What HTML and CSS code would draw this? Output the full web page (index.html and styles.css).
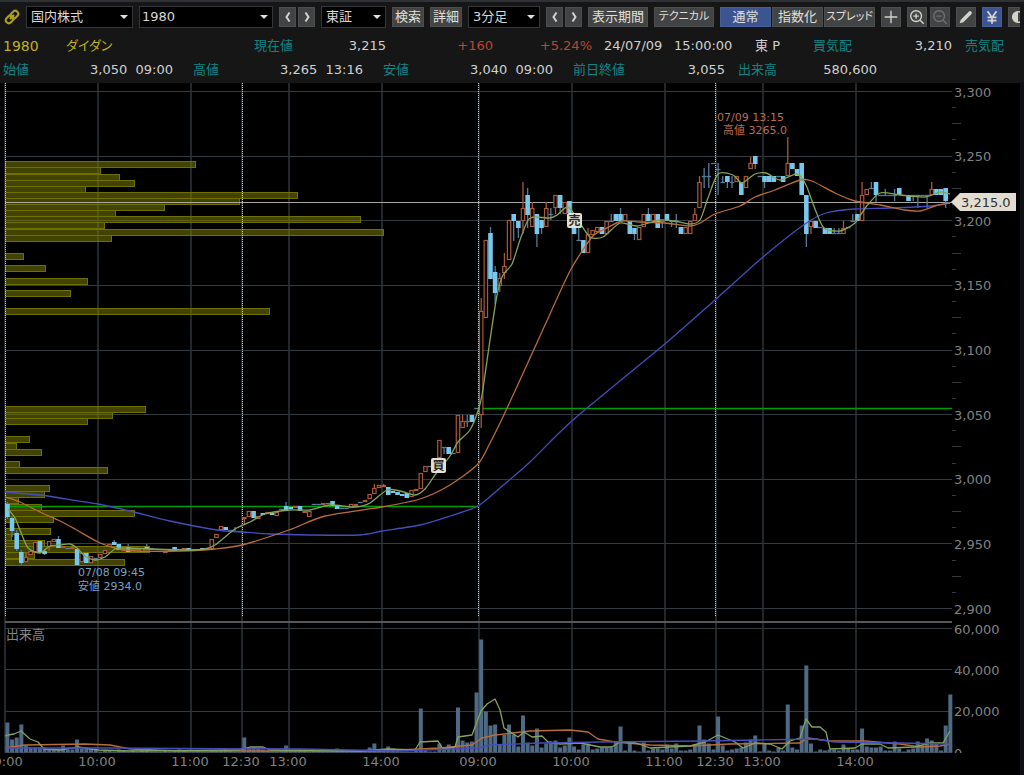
FILE: index.html
```html
<!DOCTYPE html>
<html lang="ja">
<head>
<meta charset="utf-8">
<title>1980 ダイダン</title>
<link rel="stylesheet" href="styles.css">
</head>
<body>
<header class="head">
  <div class="toolbar">
    <svg class="link-icon" viewBox="0 0 16 16" aria-hidden="true">
      <g transform="rotate(-45 8 8)">
        <rect x="0.5" y="5" width="8.5" height="6" rx="3"/>
        <rect x="7" y="5" width="8.5" height="6" rx="3"/>
        <path d="M5 8h6"/>
      </g>
    </svg>
    <span class="pick pick-market"><select aria-label="商品"><option>国内株式</option></select></span>
    <span class="pick pick-code"><select aria-label="銘柄コード"><option>1980</option></select></span>
    <span class="pair navs">
      <button class="btn nav" aria-label="前の銘柄"><svg viewBox="0 0 10 12"><path d="M6.5 1.5 3.5 6l3 4.5"/></svg></button>
      <button class="btn nav" aria-label="次の銘柄"><svg viewBox="0 0 10 12"><path d="M3.5 1.5 6.5 6l-3 4.5"/></svg></button>
    </span>
    <span class="pick pick-exchange"><select aria-label="市場"><option>東証</option></select></span>
    <button class="btn short">検索</button>
    <button class="btn short">詳細</button>
    <span class="pick pick-span"><select aria-label="足種"><option>3分足</option></select></span>
    <span class="pair navs">
      <button class="btn nav" aria-label="前の足種"><svg viewBox="0 0 10 12"><path d="M6.5 1.5 3.5 6l3 4.5"/></svg></button>
      <button class="btn nav" aria-label="次の足種"><svg viewBox="0 0 10 12"><path d="M3.5 1.5 6.5 6l-3 4.5"/></svg></button>
    </span>
    <button class="btn long">表示期間</button>
    <button class="btn long kana">テクニカル</button>
    <span class="pair">
      <button class="btn mode on">通常</button>
      <button class="btn mode">指数化</button>
      <button class="btn mode kana">スプレッド</button>
    </span>
    <button class="btn tool" aria-label="十字カーソル"><svg viewBox="0 0 20 20"><path d="M10 3v14M3 10h14"/></svg></button>
    <span class="zooms">
      <button class="btn tool" aria-label="拡大"><svg viewBox="0 0 20 20"><circle cx="9" cy="9" r="6"/><path d="M6 9h6M9 6v6M13.5 13.5l4 4"/></svg></button>
      <button class="btn tool dim" aria-label="縮小"><svg viewBox="0 0 20 20"><circle cx="9" cy="9" r="6"/><path d="M6 9h6M13.5 13.5l4 4"/></svg></button>
    </span>
    <button class="btn tool" aria-label="描画"><svg viewBox="0 0 20 20"><path class="pen" d="M6.500 13.500 14.500 5.500"/><path class="solid" d="M3 17l1.200-4.200 3 3z"/></svg></button>
    <button class="btn tool on" aria-label="約定表示"><svg viewBox="0 0 20 20"><path class="bold" d="M5 3.500 10 10.500 15 3.500M10 10v7.500M5 10.500h10M5 14h10"/></svg></button>
    <button class="btn tool" aria-label="配色"><svg viewBox="0 0 20 20"><circle cx="10" cy="10" r="6"/><path class="solid" d="M10 4a6 6 0 0 0 0 12z"/></svg></button>
  </div>
  <div class="quote quote-main">
    <span class="code">1980</span><span class="code name">ダイダン</span>
    <span class="cap">現在値</span><span class="num">3,215</span>
    <span class="num rise">+160</span><span class="num rise">+5.24%</span>
    <span class="txt">24/07/09</span><span class="txt">15:00:00</span><span class="txt">東 P</span>
    <span class="cap">買気配</span><span class="num">3,210</span><span class="cap">売気配</span>
  </div>
  <div class="quote quote-day">
    <span class="cap">始値</span><span class="num">3,050&nbsp; 09:00</span>
    <span class="cap">高値</span><span class="num">3,265&nbsp; 13:16</span>
    <span class="cap">安値</span><span class="num">3,040&nbsp; 09:00</span>
    <span class="cap">前日終値</span><span class="num">3,055</span>
    <span class="cap">出来高</span><span class="num">580,600</span>
  </div>
</header>
<main class="board">
  <svg class="chart" viewBox="0 83 1020 692" preserveAspectRatio="xMinYMin meet" role="img" aria-label="3分足チャート">
    <defs><clipPath id="volume-clip"><rect x="0" y="625" width="1020" height="128"/></clipPath></defs>
    <g id="grid"></g>
    <g id="profile"></g>
    <g id="base"></g>
    <g id="candles"></g>
    <g id="volume"></g>
    <g id="averages"></g>
    <g id="axis"></g>
    <g class="note low"><text x="78" y="576">07/08 09:45</text><text x="78" y="590">安値 2934.0</text></g>
    <g class="note high"><text x="717" y="121">07/09 13:15</text><text x="723" y="134">高値 3265.0</text></g>
    <g class="trade"><rect x="431" y="458" width="15" height="15" rx="2"/><text x="438.5" y="470">買</text></g>
    <g class="trade"><rect x="567" y="213" width="15" height="15" rx="2"/><text x="574.5" y="225">売</text></g>
    <g class="price-tag"><path d="M951 202 960 193H1016V211H960z"/><text x="961" y="207">3,215.0</text></g>
    <text class="pane-title" x="6" y="639">出来高</text>
  </svg>
</main>
<script src="chart.js"></script>
</body>
</html>
```
FILE: styles.css
```css
* { box-sizing: border-box; }
body {
  margin: 0;
  height: 100vh;
  display: flex;
  flex-direction: column;
  overflow: hidden;
  background: #000;
  color: #d0d0d0;
  font-family: "DejaVu Sans", "Noto Sans CJK JP", sans-serif;
  font-size: 13px;
}
.head {
  flex: none;
  height: 83px;
  background: #161616;
  border-top: 2px solid #303134;
  overflow: hidden;
}
.toolbar {
  display: flex;
  align-items: center;
  gap: 6px;
  height: 30px;
  padding-left: 4px;
  margin-right: 4px;
  overflow: hidden;
}
.toolbar > * { flex: none; }
.link-icon { width: 16px; height: 16px; fill: none; stroke: #b0a018; stroke-width: 2; }
.pick { position: relative; height: 22px; }
.pick::after {
  content: "";
  position: absolute;
  right: 5px;
  top: 9px;
  border: 4px solid transparent;
  border-top: 4px solid #e0e0e0;
  border-bottom: 0;
  pointer-events: none;
}
.pick select {
  appearance: none;
  display: block;
  width: 100%;
  height: 100%;
  padding: 0 4px;
  border: 1px solid #34363b;
  border-radius: 0;
  background: #000;
  color: #d8d8d8;
  font: 13px/20px "DejaVu Sans", "Noto Sans CJK JP", sans-serif;
}
.pick-market { width: 107px; }
.pick-code { width: 134px; }
.pick-code select { padding: 0 2px; }
.pick-exchange { width: 65px; }
.pick-span { width: 72px; }
.pair { display: flex; gap: 1px; }
.navs { gap: 2px; }
.zooms { display: flex; gap: 3px; }
.btn {
  display: flex;
  align-items: center;
  justify-content: center;
  height: 20px;
  padding: 0;
  border: 1px solid #4c4d4e;
  border-radius: 0;
  background: #424344;
  color: #e0e0d8;
  font: 13px/18px "DejaVu Sans", "Noto Sans CJK JP", sans-serif;
  white-space: nowrap;
}
.btn svg { fill: none; stroke: #d4d4cc; stroke-width: 1.5; }
.nav { width: 17px; }
.btn.nav svg { width: 10px; height: 12px; stroke-width: 2; }
.short { width: 32px; }
.long { width: 60px; }
.kana { font-feature-settings: "palt"; font-size: 11px; }
.mode { width: 51px; }
.tool { width: 20px; }
.tool svg { width: 18px; height: 18px; flex: none; }
.btn.dim svg { stroke: #707070; }
.on { background: #3c5590; border-color: #455e98; }
.btn .solid { fill: #d4d4cc; stroke: none; }
.btn .bold { stroke-width: 2; }
.btn .pen { stroke-width: 4; stroke-linecap: round; }
.quote { display: grid; align-items: center; line-height: 20px; white-space: nowrap; }
.quote-main {
  height: 27px;
  padding-left: 3px;
  grid-template-columns: 63px 188px 60px 72px 107px 99px 82px 81px 58px 60px 79px 1fr;
}
.quote-day {
  height: 22px;
  padding-left: 3px;
  grid-template-columns: 60px 130px 60px 130px 60px 130px 75px 77px 65px 87px;
}
.quote-main .rise + .txt { padding-left: 12px; }
.code { color: #c0b020; font-size: 14px; }
.name { font-feature-settings: "palt"; font-size: 13px; }
.cap { color: #108484; }
.num { text-align: right; }
.quote-day .num { padding-right: 20px; }
.quote-main .cap:last-child { padding-left: 13px; }
.quote-day .num:nth-child(8), .quote-day .num:last-child { padding-right: 0; }
.quote-day .cap:nth-child(9) { padding-left: 13px; }
.rise { color: #b84830; }
.board { flex: 1; min-height: 0; border-right: 4px solid #101014; overflow: hidden; }
.chart { display: block; width: 100%; height: auto; }
.chart text { font-family: "DejaVu Sans", "Noto Sans CJK JP", sans-serif; }
.axis-label { font-size: 13px; fill: #828282; }
.axis-label.mid { text-anchor: middle; }
.pane-title { font-size: 13px; fill: #858585; }
.note { font-size: 11px; }
.note.low { fill: #7aa0c0; }
.note.high { fill: #b86e52; }
.grid-line { stroke: #343a42; stroke-width: 1; shape-rendering: crispEdges; }
.grid-time { stroke: #2e343a; stroke-width: 1.5; }
.session { stroke: #c8c8c8; stroke-width: 1; stroke-dasharray: 1 1; shape-rendering: crispEdges; }
.divider { stroke: #585858; stroke-width: 2; }
.tick { stroke: #34383e; stroke-width: 1; shape-rendering: crispEdges; }
.volume-at-price { fill: #808000; fill-opacity: 0.52; stroke: #707000; stroke-width: 1; }
.prev-close { stroke: #00a000; stroke-width: 1.5; }
.last-price { stroke: #a8a8a0; stroke-width: 1; shape-rendering: crispEdges; }
.up { fill: #000; stroke: #a8583c; stroke-width: 1.2; }
.down { fill: #78c8ec; stroke: none; }
.wick-up { stroke: #a8583c; stroke-width: 1.3; }
.wick-down { stroke: #567c9c; stroke-width: 1.3; }
.volume-bar { fill: #4f6a84; }
.average { fill: none; stroke-width: 1.3; stroke-linejoin: round; }
.short-term { stroke: #84a458; }
.mid-term { stroke: #b86c3a; }
.long-term { stroke: #444ebc; }
.trade { font-size: 12px; font-weight: bold; text-anchor: middle; fill: #282828; }
.trade rect { fill: #e4e0d4; }
.price-tag { font-size: 13px; fill: #303030; }
.price-tag path { fill: #e2ddd0; }
```
FILE: chart.js
```js
const NS = "http://www.w3.org/2000/svg";
const FIRST = 7.4;   // centre of the first candle
const PITCH = 4.645; // distance between candles
const LEFT = 5;
const RIGHT = 952;

function add(layer, tag, attrs, text) {
  const node = document.createElementNS(NS, tag);
  for (const key in attrs) node.setAttribute(key, attrs[key]);
  if (text) node.textContent = text;
  document.getElementById(layer).appendChild(node);
  return node;
}
function line(layer, cls, x1, y1, x2, y2) {
  add(layer, "line", { class: cls, x1, y1, x2, y2 });
}
const slotX = i => FIRST + i * PITCH;
const priceY = p => 91.5 + (3300 - p) * 1.2925;
const volumeY = v => 752.5 - v * 0.002065;

// Price and time grid
for (let p = 2900; p <= 3300; p += 50) {
  line("grid", "grid-line", LEFT, priceY(p), RIGHT, priceY(p));
  add("axis", "text", { class: "axis-label", x: 954, y: Math.round(priceY(p)) + 5 }, p.toLocaleString("en-US"));
}
for (let k = 1; k < 32; k++) {
  if (k % 4 === 0) continue;
  const y = priceY(3300 - k * 12.5);
  line("axis", "tick", 952, y, k % 2 ? 956 : 961, y);
}
[0, 20000, 40000, 60000].forEach(v => {
  line("grid", "grid-line", LEFT, volumeY(v), RIGHT, volumeY(v));
  add("axis", "text", { class: "axis-label", x: 954, y: Math.round(volumeY(v)) + 5, "clip-path": "url(#volume-clip)" }, v.toLocaleString("en-US"));
});
[[5, "09:00"], [98, "10:00"], [191, "11:00"], [242, "12:30"], [289, "13:00"], [382, "14:00"],
 [479, "09:00"], [572, "10:00"], [665, "11:00"], [716, "12:30"], [763, "13:00"], [856, "14:00"]].forEach(([x, label]) => {
  line("grid", "grid-time", x, 83, x, 753);
  add("axis", "text", { class: "axis-label mid", x: x - 1, y: 766 }, label);
});
[5, 242, 478, 715].forEach(x => line("base", "session", x, 83, x, 617));
line("base", "divider", LEFT, 622, RIGHT, 622);

// Volume at price: [centre y, right edge]
[[164,196],[170,101],[177,120],[183,135],[189,86],[195,298],[201,240],[207,165],[213,116],[219,361],[225,105],[232,384],[238,112],
 [256,24],[268,46],[281,88],[293,71],[311,270],[409,146],[415,113],[421,88],[439,30],[446,17],[452,42],[464,20],[470,108],
 [488,50],[494,45],[500,19],[507,42],[513,135],[519,54],[531,51],[537,12],[543,45],[549,150],[555,35],[562,125]].forEach(([y, x]) => {
  add("profile", "rect", { class: "volume-at-price", x: 5.5, y: y - 2.5, width: x - 6, height: 6 });
});

line("base", "prev-close", LEFT, 506.5, 478, 506.5);
line("base", "prev-close", 478, 408.5, RIGHT, 408.5);
line("base", "last-price", LEFT, 202, RIGHT, 202);

// Candles in slot order: [direction, body top, body bottom, wick top, wick bottom]
const U = 1, D = 0;
const candles = [
 [D,504,517,502,519],[D,518,531,517,537],[D,533,549,530,551],[D,552,563,550,565],[U,557,562,552],[U,551,555],[U,542,552],[D,541,553],
 [D,551,554,549,555],[U,541,547,541,551],[U,539,542],[D,539,548,536],[U,546,548],[D,548,549],[U,547,549],[D,549,565],[U,553,562],
 [D,553,563],[U,556,563],[D,558,559],[U,554,558],[U,550,554],[U,544,547],[D,542,545,540],[D,544,550],[U,549,551],[D,547,552,544],
 [U,549,551],[U,548,550],[U,548,552],[D,547,549,544],[U,548,550],[D,549,550],[D,551,552],[U,551,552],[U,550,552,549],[D,547,551],
 [D,549,550],[U,548,550],[D,548,550],[U,549,550],[U,549,550],[D,548,550],[U,548,550],[U,539,549],[U,534,538],[U,526,530],[D,527,530],
 [D,530,531],[D,531,532,527],[D,531,532],[U,517,518,517,525],[U,511,517],[D,511,518],[U,516,519],[D,513,515],[U,512,514],[D,513,515],
 [U,512,516],[D,509,510],[D,506,511,502],[D,507,509],[U,506,507],[D,506,511],[U,511,513],[U,511,517],[D,504,505],[D,504,505],
 [U,503,504],[D,503,504],[D,501,506],[D,505,509],[D,508,509],[D,508,509],[U,504,508],[U,504,506],[D,502,503],[U,500,502],[U,494,499],
 [U,488,494,484],[U,485,488],[U,485,487,484],[D,487,495],[D,491,493],[D,492,495],[D,494,496],[D,493,498],[U,490,497],[U,489,491],
 [U,473,489],[U,466,472],[D,466,467],[U,462,466],[U,440,458],[D,447,448,447,454],[D,447,454],[D,453,454],[U,415,453],[U,421,428,415],
 [D,421,422,415,427],[D,415,422],[D,408,409],
 [U,311,415,298,428],[U,240,318],[D,233,279,227],[D,272,293,266,304],[U,278,286,273,292],[U,266,273,253,279],[U,220,260],
 [D,214,221,214,241],[D,221,228,221,238],[U,208,221,182,234],[D,195,215,188,228],[U,208,227,202],[D,214,234,214,247],
 [D,220,228,220,234],[U,208,227,202],[D,214,215,208,220],[U,195,208,195,214],[D,195,208,195,214],[U,202,214],[D,201,213],
 [D,214,234],[D,240,241,214],[D,240,253],[U,234,253,228],[U,230,235],[U,227,232],[D,227,234],[U,221,234],[D,221,222,214],
 [D,214,221],[D,214,221,208],[U,214,221],[D,221,234],[D,228,234,228,240],[U,227,240],[U,214,227],[D,214,221,208],[U,214,221],
 [D,214,228],[D,221,222,221,228],[D,214,221],[D,221,222,221,227],[D,221,222,214,228],[D,227,234],[U,227,234],[U,221,234],
 [U,214,221,208],[U,182,208,176],[D,176,177,168,188],[D,176,177,163,188],[D,163,164],[D,169,170,163,195],[D,182,183,176],
 [D,176,182,176,188],[D,182,183,176,188],[U,176,182],[D,182,195],[U,176,188],[U,163,169,157],[D,156,164,156,169],[D,176,177],
 [D,176,182,176,188],[D,176,182],[D,176,182],[D,176,177],[D,176,182],[U,163,176,137],[D,163,169],[D,169,176],[D,163,195],
 [D,195,234,195,247],[U,221,227,221,234],[D,221,228],[D,227,228],[D,228,234],[D,228,234],[D,233,234,228],[D,233,234,228],
 [U,228,234,221],[D,227,228],[D,221,222,214],[D,214,221],[U,195,221,182],[U,189,195],[D,188,189,182],[D,182,195,182,202],
 [D,195,196],[D,195,196,189],[D,195,196],[D,195,196,189,201],[D,188,195],[D,195,196],[D,195,201],[D,195,196,195,201],
 [D,195,196,195,208],[D,195,196],[D,195,196,195,208],[U,189,195,182],[D,189,195],[D,189,195],[D,188,201,188,208]
];
// The afternoon of the second day has one slot without a trade before 12:30
const gapSlot = candles.length < 204 ? 153 : Infinity;
const shift = 203 - candles.length;
candles.forEach(([dir, top, bottom, high, low], i) => {
  const x = slotX(i >= gapSlot ? i + shift : i);
  line("candles", dir ? "wick-up" : "wick-down", x, high || top, x, low || bottom);
  if (dir) add("candles", "rect", { class: "up", x: x - 1.7, y: top + 0.5, width: 3.4, height: Math.max(1, bottom - top - 1) });
  else if (bottom - top === 1) line("candles", "wick-down", x - 2.3, top + 0.5, x + 2.3, top + 0.5);
  else add("candles", "rect", { class: "down", x: x - 2.3, y: top, width: 4.6, height: bottom - top });
});

// Volume bar heights in slot order
const volume = [30,13,15,28,7,5,5,5,5,3,4,4,7,3,3,13,4,5,4,3,1,2,2,1,3,2,1,2,1,2,2,1,1,1,2,1,2,3,2,1,1,2,1,1,2,2,2,3,2,1,1,
 15,5,5,4,3,2,1,1,3,7,2,2,3,2,1,2,3,1,1,2,4,2,1,1,1,2,1,5,9,3,2,6,4,2,1,1,1,2,44,2,1,1,9,5,8,6,45,12,10,11,60,
 113,41,27,28,8,18,28,18,6,37,10,7,24,5,9,11,12,5,7,15,6,3,8,9,3,4,5,5,5,10,26,2,9,2,1,10,2,4,4,3,8,4,9,2,2,3,8,
 27,13,9,3,36,7,2,3,4,5,10,13,17,1,9,2,1,5,2,48,5,3,27,87,9,1,3,2,3,3,2,8,4,3,3,24,6,5,5,6,2,2,11,4,1,3,4,11,7,14,12,9,2,27,58];
volume.forEach((h, i) => add("volume", "rect", { class: "volume-bar", x: slotX(i) - 2, y: 752.5 - h, width: 4, height: h }));

// Moving averages, drawn as smooth curves through the sampled points
function average(cls, pts, smooth) {
  const p = pts.trim().split(" ").map(s => s.split(",").map(Number));
  let d = `M${p[0]}`;
  for (let i = 0; i < p.length - 1; i++) {
    if (!smooth) { d += `L${p[i + 1]}`; continue; }
    const a = p[i - 1] || p[i], b = p[i], c = p[i + 1], e = p[i + 2] || c;
    d += `C${b[0] + (c[0] - a[0]) / 8},${b[1] + (c[1] - a[1]) / 8} ${c[0] - (e[0] - b[0]) / 8},${c[1] - (e[1] - b[1]) / 8} ${c}`;
  }
  add("averages", "path", { class: "average " + cls, d });
}
average("long-term", "5,492 40,495 60,498 98,504 130,511 170,521 217,530 242,532 270,534 310,535 360,535 382,531 420,525 450,516 478,506 500,488 530,462 573,420 666,343 715,300 763,257 805,224 826,213 855,209 890,208 930,206 950,203", true);
average("mid-term", "5,497 20,502 40,512 60,521 75,529 98,542 115,548 135,551 180,551 215,549 242,545 289,530 325,516 382,507 420,499 450,485 478,464 490,443 502,419 520,380 545,325 570,271 592,237 605,229 622,221 640,222 665,223 690,226 700,223 715,214 740,206 755,197 775,190 800,180 812,181 835,193 855,201 880,205 905,210 920,211 935,206 950,203", true);
average("short-term", "8,509 15,518 20,530 28,548 40,553 50,546 60,545 70,544 77,548 85,556 95,560 105,557 115,549 125,548 150,549 190,550 205,549 215,545 235,529 250,522 265,514 290,510 310,510 330,505 355,507 370,503 387,490 400,491 415,495 425,489 435,475 450,456 458,442 470,430 478,411 482,395 490,340 497,295 503,275 512,264 520,240 528,220 535,217 550,218 557,215 568,207 578,220 590,237 603,237 620,223 637,226 660,220 675,221 690,224 700,220 708,198 718,174 733,175 742,183 755,174 766,173 780,180 797,174 806,185 815,209 824,228 840,231 855,223 866,207 880,193 900,195 925,197 940,192 950,194", true);
average("mid-term", "5,748 25,745 85,744 110,745 130,749 180,751 380,751 440,748 472,745 482,738 495,735 530,731 570,730 588,732 598,739 615,742 650,745 690,746 730,744 800,743 808,738 830,741 865,741 900,744 920,747 940,746 950,744", false);
average("short-term", "5,736 8,735 14,734 21,731 30,739 38,742 44,749 60,750 78,747 98,750 130,751 240,750 250,747 263,747 270,750 360,751 388,749 415,750 420,742 438,741 443,749 455,747 458,737 472,735 481,711 487,704 495,699 500,710 504,728 518,737 524,732 532,737 542,736 548,742 560,744 580,743 600,747 612,747 620,742 636,743 650,748 690,746 705,742 718,735 735,742 743,748 755,743 770,744 782,749 790,741 800,738 806,719 812,727 820,727 826,732 830,749 855,748 862,744 880,744 888,748 915,747 930,743 943,743 950,731", false);
average("long-term", "5,748 100,748 300,749 400,751 478,748 490,745 540,743 600,742 700,741 760,740 815,739 835,742 900,743 950,744", false);
```
